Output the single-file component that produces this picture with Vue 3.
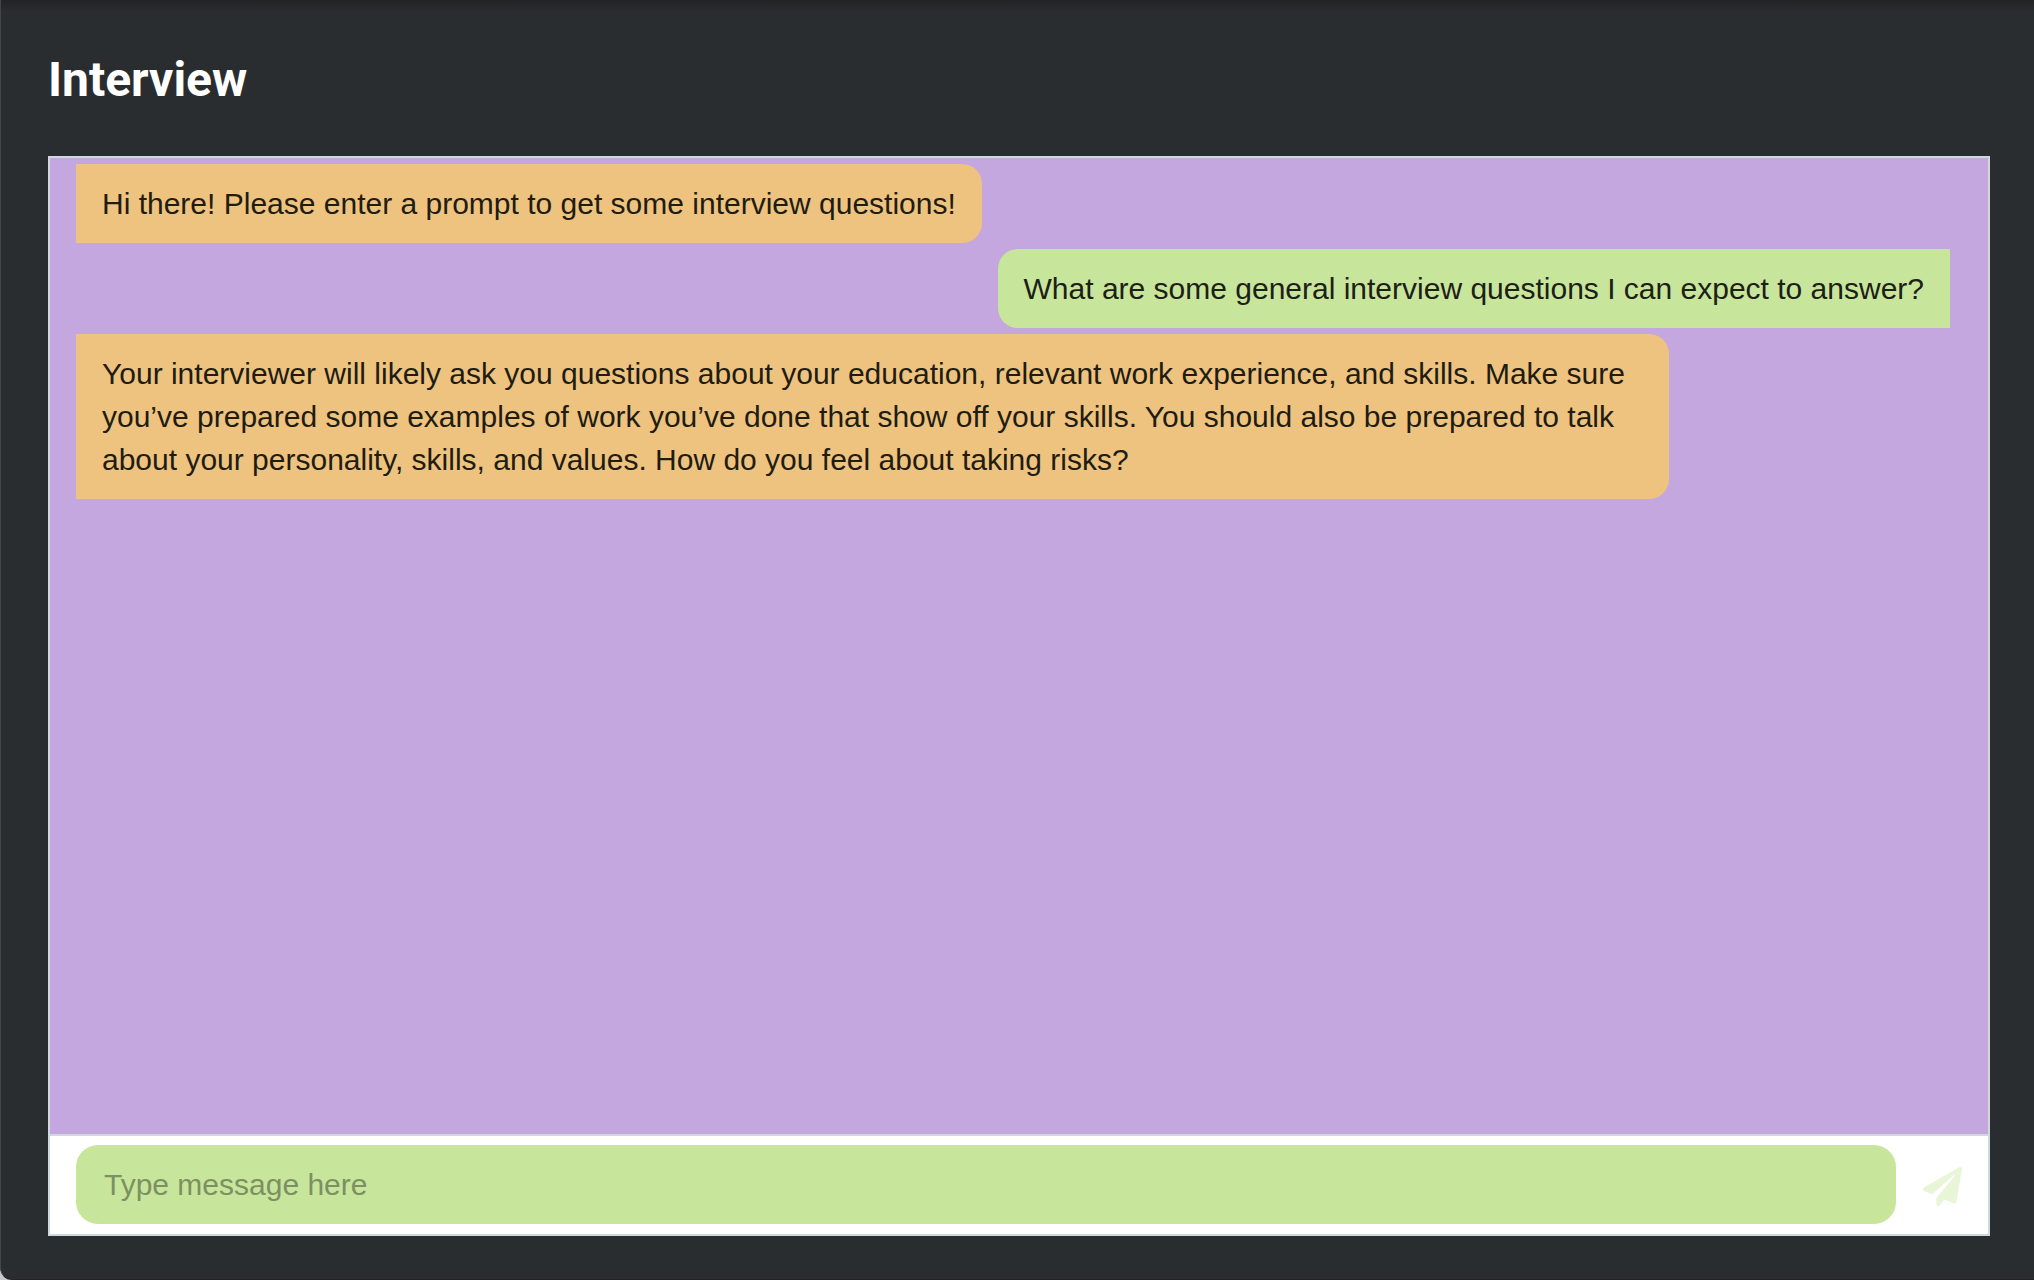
<script setup>
import { ref } from 'vue'

const messages = [
  { from: 'bot', text: 'Hi there! Please enter a prompt to get some interview questions!' },
  { from: 'user', text: 'What are some general interview questions I can expect to answer?' },
  {
    from: 'bot',
    text: 'Your interviewer will likely ask you questions about your education, relevant work experience, and skills. Make sure you’ve prepared some examples of work you’ve done that show off your skills. You should also be prepared to talk about your personality, skills, and values. How do you feel about taking risks?'
  }
]
const draft = ref('')
</script>

<template>
  <main class="window">
    <h1 class="title">Interview</h1>
    <section class="chat">
      <div class="messages">
        <p v-for="message in messages" :key="message.text" class="bubble" :class="message.from">{{ message.text }}</p>
      </div>
      <form class="composer" @submit.prevent>
        <input v-model="draft" class="field" type="text" placeholder="Type message here" aria-label="Message" />
        <button class="send" type="submit" aria-label="Send message" :disabled="!draft">
          <svg viewBox="0 0 512 512" aria-hidden="true">
            <path d="M476 3.200 12.500 270.600c-18.100 10.400-15.800 35.600 2.200 43.200L121 358.400l287.300-253.200c5.500-4.900 13.300 2.600 8.600 8.300L176 407v80.500c0 23.600 28.500 32.900 42.500 15.800L282 426l124.600 52.200c14.200 6 30.400-2.900 33-18.200l72-432C515 7.800 493.300-6.800 476 3.200z" />
          </svg>
        </button>
      </form>
    </section>
  </main>
</template>

<style>
body {
  margin: 0;
  background: #c8c8c8;
}
</style>

<style scoped>
.window {
  box-sizing: border-box;
  display: flex;
  flex-direction: column;
  min-height: 100vh;
  padding: 0 44px 43px 47px;
  border-left: 1px solid #424648;
  border-bottom: 1px solid #2b1e26;
  border-bottom-left-radius: 12px;
  background: linear-gradient(#232326, #2a2d30 12px, #2a2d30);
}

.title {
  margin: 52px 0 48px;
  font: 700 48px/56px Roboto, sans-serif;
  color: #fff;
}

.chat {
  flex: 1;
  display: flex;
  flex-direction: column;
  border: 2px solid #cfd8dc;
  background: #fff;
  font-family: "Liberation Sans", Arial, sans-serif;
}

.messages {
  flex: 1;
  display: flex;
  flex-direction: column;
  align-items: flex-start;
  gap: 6px;
  padding: 6px 38px 6px 26px;
  background: #c4a7de;
}

.bubble {
  box-sizing: border-box;
  max-width: 85%;
  margin: 0;
  padding: 18px 26px;
  font-size: 30px;
  line-height: 43px;
}

.bot {
  border-radius: 0 20px 20px 0;
  background: #eec37f;
  color: #211c12;
}

.user {
  align-self: flex-end;
  border-radius: 20px 0 0 20px;
  background: #c8e69b;
  color: #1c2016;
}

.composer {
  display: flex;
  align-items: center;
  padding: 9px 26px 10px;
  border-top: 2px solid #cfd8dc;
}

.field {
  box-sizing: border-box;
  flex: 1;
  min-width: 0;
  height: 79px;
  margin-right: 27px;
  padding: 0 28px;
  border: 0;
  border-radius: 22px;
  outline: 0;
  background: #c8e69b;
  color: #1c2016;
  font: 30px/43px "Liberation Sans", Arial, sans-serif;
}

.field::placeholder {
  color: #7c9062;
  opacity: 1;
}

.send {
  padding: 4px 0 0;
  border: 0;
  background: none;
  color: #e9f5d7;
}

.send svg {
  display: block;
  width: 39px;
  height: 39px;
  fill: currentColor;
}
</style>
